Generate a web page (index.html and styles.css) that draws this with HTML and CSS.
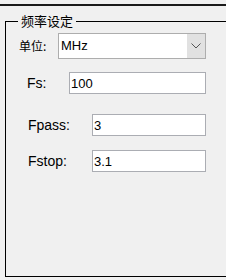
FILE: index.html
```html
<!DOCTYPE html>
<html lang="zh">
<head>
    <meta charset="UTF-8">
    <title>频率设定</title>
    <link rel="stylesheet" href="styles.css">
</head>
<body>
    <div class="topbar"></div>

    <!-- Frequency settings group -->
    <fieldset class="group">
        <legend class="group-title">频率设定</legend>

        <div class="row row-unit">
            <label class="label label-cn">单位:</label>
            <div class="combo">
                <span class="combo-value">MHz</span>
                <span class="combo-btn">
                    <svg width="10" height="6" viewBox="0 0 10 6">
                        <path d="M0.5 0.5 L5 5 L9.5 0.5" fill="none" stroke="#555" stroke-width="1"/>
                    </svg>
                </span>
            </div>
        </div>

        <div class="row row-fs">
            <label class="label">Fs:</label>
            <input class="field" type="text" value="100">
        </div>

        <div class="row row-pass">
            <label class="label">Fpass:</label>
            <input class="field" type="text" value="3">
        </div>

        <div class="row row-stop">
            <label class="label">Fstop:</label>
            <input class="field" type="text" value="3.1">
        </div>
    </fieldset>
</body>
</html>
```

FILE: styles.css
```css
html, body {
    margin: 0;
    background: #f0f0f0;
}

body {
    width: 226px;
    height: 280px;
    overflow: hidden;
    font-family: "Liberation Sans", "Noto Sans CJK SC", sans-serif;
    font-size: 13px;
    color: #000;
}

.topbar {
    height: 2px;
    margin-top: 4px;
    background: #1a1a1a;
}

/* Group box, its right edge runs past the window */
.group {
    margin: 7px 0 0 5px;
    padding: 0;
    width: 221px;
    height: 264px;
    min-width: 0;
    box-sizing: border-box;
    border: 1px solid #000;
    border-right: none;
}

.group-title {
    margin-left: 12px;
    padding: 0 3px;
    font: 13px/16px "Noto Sans CJK SC", sans-serif;
}

.row {
    display: flex;
    align-items: center;
}

.label {
    flex: none;
    font-size: 14px;
}

.label-cn {
    font: 12px/16px "Noto Sans CJK SC", sans-serif;
}

.row-unit {
    margin-top: 4px;
    padding-left: 13px;
}

.row-unit .label {
    width: 39px;
}

.row-fs {
    margin-top: 13px;
    padding-left: 21px;
}

.row-fs .label {
    width: 42px;
}

.row-pass {
    margin-top: 20px;
    padding-left: 22px;
}

.row-stop {
    margin-top: 14px;
    padding-left: 22px;
}

.row-pass .label,
.row-stop .label {
    width: 64px;
}

/* Combo box */
.combo {
    display: flex;
    width: 148px;
    height: 26px;
    box-sizing: border-box;
    border: 1px solid #adadad;
    background: #fff;
}

.combo-value {
    flex: 1;
    padding-left: 2px;
    line-height: 24px;
}

.combo-btn {
    width: 18px;
    display: flex;
    align-items: center;
    justify-content: center;
    background: #e1e1e1;
}

/* Text fields */
.field {
    height: 22px;
    box-sizing: border-box;
    margin: 0;
    border: 1px solid #abadb3;
    padding: 0 1px;
    background: #fff;
    font: 13px "Liberation Sans", sans-serif;
    color: #000;
    outline: none;
}

.row-fs .field {
    width: 137px;
}

.row-pass .field,
.row-stop .field {
    width: 114px;
}
```
